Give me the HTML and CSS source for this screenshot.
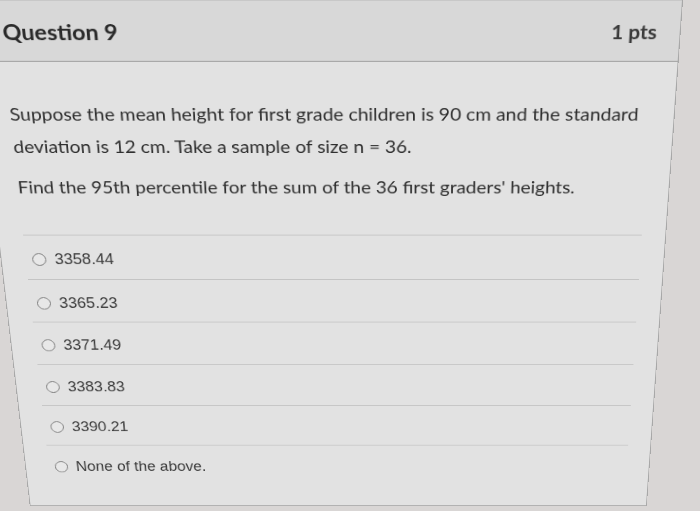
FILE: index.html
```html
<!DOCTYPE html>
<html lang="en">
<head>
<meta charset="utf-8">
<title>Question 9</title>
<link rel="stylesheet" href="styles.css">
</head>
<body>
<div class="stage">
  <div class="card">
    <div class="header">
      <span class="qname">Question 9</span>
      <span class="pts">1 pts</span>
    </div>
    <div class="content">
      <p class="q">Suppose the mean height for first grade children is 90 cm and the standard deviation is 12 cm. Take a sample of size n = 36.</p>
      <p class="q">Find the 95th percentile for the sum of the 36 first graders' heights.</p>
      <ul class="answers">
        <li class="answer"><span class="radio"></span><span class="label">3358.44</span></li>
        <li class="answer"><span class="radio"></span><span class="label">3365.23</span></li>
        <li class="answer"><span class="radio"></span><span class="label">3371.49</span></li>
        <li class="answer"><span class="radio"></span><span class="label">3383.83</span></li>
        <li class="answer"><span class="radio"></span><span class="label">3390.21</span></li>
        <li class="answer"><span class="radio"></span><span class="label">None of the above.</span></li>
      </ul>
    </div>
  </div>
</div>
</body>
</html>
```
FILE: styles.css
```css
html, body {
  margin: 0;
  background: #d9d6d5;
}

.stage {
  height: 511px;
  overflow: hidden;
}

.card {
  width: 713px;
  margin-left: -30px;
  box-sizing: border-box;
  background: #e2e2e2;
  border-left: 1px solid #a8a8a8;
  border-right: 1px solid #a8a8a8;
  border-bottom: 1px solid #ababab;
  font-family: Lato, "Liberation Sans", sans-serif;
  color: #2e2e2e;
  transform-origin: 444px 0;
  transform: perspective(1000px) rotateX(-14.9deg);
}

.header {
  height: 65px;
  box-sizing: border-box;
  background: #d8d8d8;
  border-top: 1px solid #c8c8c8;
  border-bottom: 1px solid #9b9b9b;
  display: flex;
  justify-content: space-between;
  align-items: center;
  padding: 0 23px 0 28px;
}

.qname {
  font-size: 23.5px;
  font-weight: bold;
  color: #2a2a2a;
}

.pts {
  font-size: 21px;
  font-weight: bold;
  color: #3a3a3a;
}

.content {
  padding: 39px 25px 29px 26px;
}

.q {
  margin: 0;
  font-size: 19.9px;
  line-height: 35.6px;
}

.q + .q {
  margin-top: 10.4px;
}

.answers {
  list-style: none;
  margin: 38px 0 0;
  padding: 0;
}

.answer {
  height: 52.6px;
  box-sizing: border-box;
  border-top: 1px solid #c3c3c3;
  display: flex;
  align-items: center;
  gap: 9px;
  padding: 5px 0 0 7px;
  font-family: "Liberation Sans", Arial, sans-serif;
  font-size: 17.6px;
  color: #3b3b3b;
}

.radio {
  width: 15px;
  height: 15px;
  box-sizing: border-box;
  border: 1.6px solid #787878;
  border-radius: 50%;
  background: #e8e8e8;
  flex: none;
}
```
